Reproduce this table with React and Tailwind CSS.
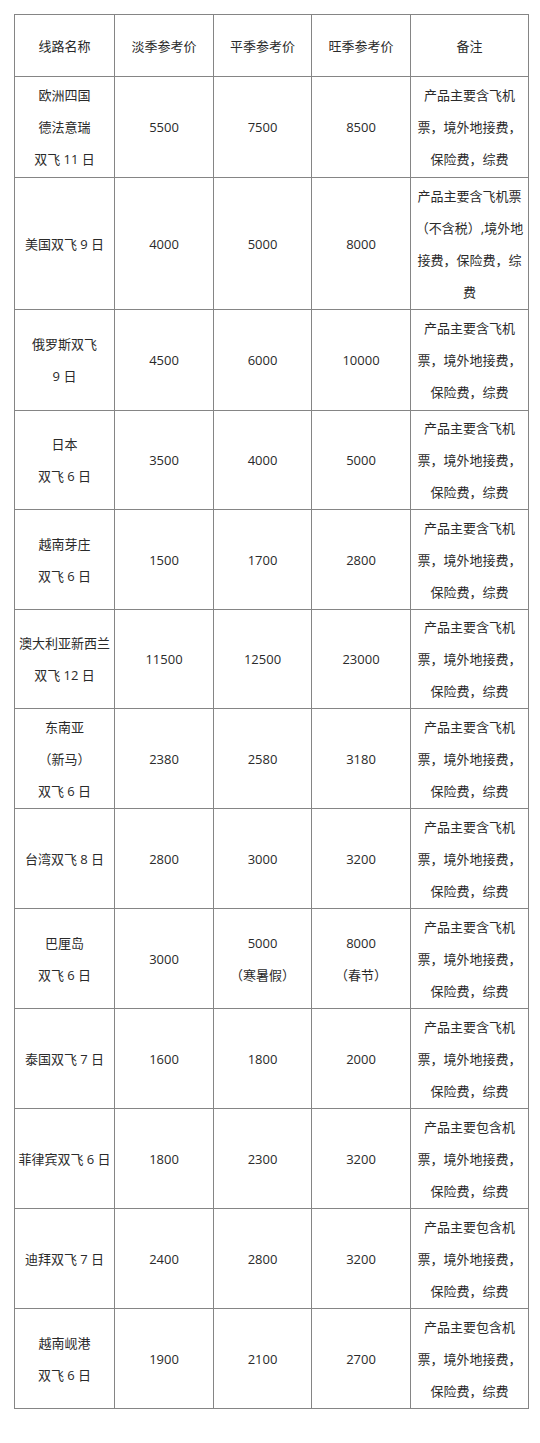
const NOTE = ['产品主要含飞机', '票，境外地接费，', '保险费，综费'];
const NOTE_B = ['产品主要包含机', '票，境外地接费，', '保险费，综费'];

const rows = [
  { name: ['欧洲四国', '德法意瑞', '双飞 11 日'], low: ['5500'], mid: ['7500'], high: ['8500'], note: NOTE, h: 'h-[101px]' },
  { name: ['美国双飞 9 日'], low: ['4000'], mid: ['5000'], high: ['8000'], note: ['产品主要含飞机票', '（不含税）,境外地', '接费，保险费，综', '费'], h: 'h-[132px]' },
  { name: ['俄罗斯双飞', '9 日'], low: ['4500'], mid: ['6000'], high: ['10000'], note: NOTE, h: 'h-[101px]' },
  { name: ['日本', '双飞 6 日'], low: ['3500'], mid: ['4000'], high: ['5000'], note: NOTE, h: 'h-[99px]' },
  { name: ['越南芽庄', '双飞 6 日'], low: ['1500'], mid: ['1700'], high: ['2800'], note: NOTE, h: 'h-[100px]' },
  { name: ['澳大利亚新西兰', '双飞 12 日'], low: ['11500'], mid: ['12500'], high: ['23000'], note: NOTE, h: 'h-[99px]' },
  { name: ['东南亚', '（新马）', '双飞 6 日'], low: ['2380'], mid: ['2580'], high: ['3180'], note: NOTE, h: 'h-[100px]' },
  { name: ['台湾双飞 8 日'], low: ['2800'], mid: ['3000'], high: ['3200'], note: NOTE, h: 'h-[100px]' },
  { name: ['巴厘岛', '双飞 6 日'], low: ['3000'], mid: ['5000', '（寒暑假）'], high: ['8000', '（春节）'], note: NOTE, h: 'h-[100px]' },
  { name: ['泰国双飞 7 日'], low: ['1600'], mid: ['1800'], high: ['2000'], note: NOTE, h: 'h-[100px]' },
  { name: ['菲律宾双飞 6 日'], low: ['1800'], mid: ['2300'], high: ['3200'], note: NOTE_B, h: 'h-[100px]' },
  { name: ['迪拜双飞 7 日'], low: ['2400'], mid: ['2800'], high: ['3200'], note: NOTE_B, h: 'h-[100px]' },
  { name: ['越南岘港', '双飞 6 日'], low: ['1900'], mid: ['2100'], high: ['2700'], note: NOTE_B, h: 'h-[100px]' },
];

function Lines({ lines }) {
  return lines.map((l, i) => (
    <div key={i} className="whitespace-nowrap">{l}</div>
  ));
}

const cell = 'border border-[#858585] text-center align-middle p-0 leading-[32px]';

export default function App() {
  return (
    <div
      className="w-[540px] min-h-[1443px] bg-white text-[#2a2a2a] text-[13px] pt-[14px] pl-[14px]"
      style={{ fontFamily: '"Open Sans", "Noto Sans CJK SC", sans-serif' }}
    >
      <table className="table-fixed border-collapse w-[514px]">
        <colgroup>
          <col className="w-[100px]" />
          <col className="w-[99px]" />
          <col className="w-[98px]" />
          <col className="w-[99px]" />
          <col className="w-[118px]" />
        </colgroup>
        <thead>
          <tr>
            {['线路名称', '淡季参考价', '平季参考价', '旺季参考价', '备注'].map(t => (
              <th key={t} className={`${cell} h-[62px] font-normal`}>{t}</th>
            ))}
          </tr>
        </thead>
        <tbody>
          {rows.map((r, i) => (
            <tr key={i}>
              <td className={`${cell} ${r.h}`}><Lines lines={r.name} /></td>
              <td className={`${cell} ${r.h}`}><Lines lines={r.low} /></td>
              <td className={`${cell} ${r.h}`}><Lines lines={r.mid} /></td>
              <td className={`${cell} ${r.h}`}><Lines lines={r.high} /></td>
              <td className={`${cell} ${r.h}`}><Lines lines={r.note} /></td>
            </tr>
          ))}
        </tbody>
      </table>
    </div>
  );
}
